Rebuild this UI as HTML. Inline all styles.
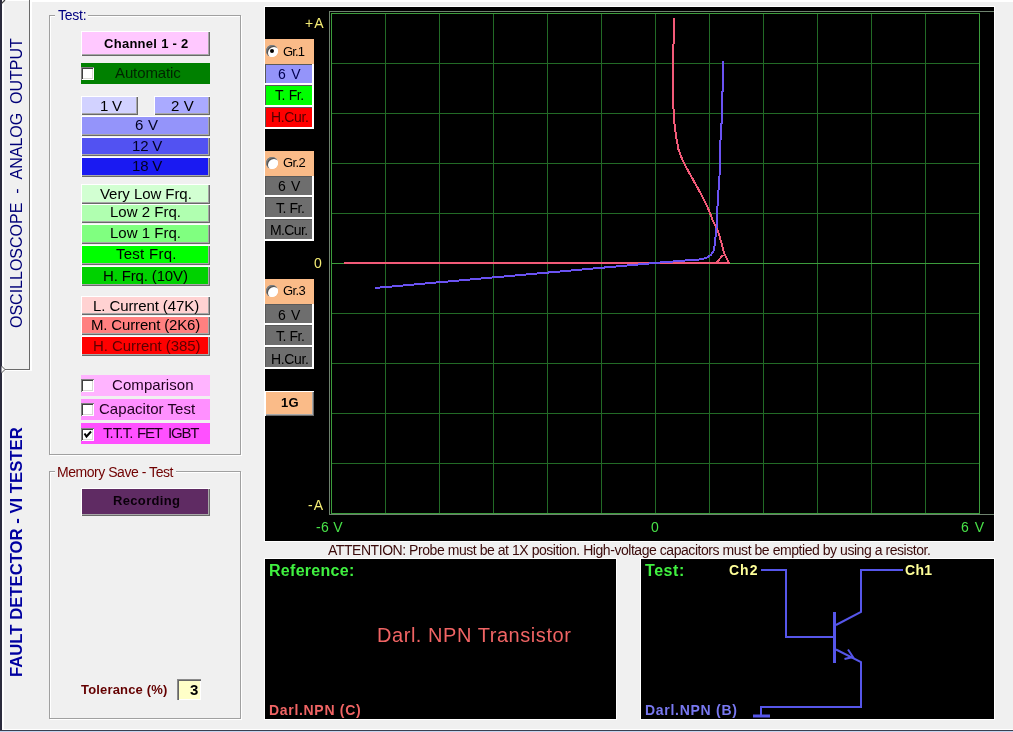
<!DOCTYPE html>
<html><head><meta charset="utf-8">
<style>
*{margin:0;padding:0;box-sizing:border-box}
html,body{width:1013px;height:732px;overflow:hidden;background:#F0F0F0;font-family:"Liberation Sans",sans-serif;position:relative}
.a{position:absolute}
.t{position:absolute;white-space:nowrap;line-height:1;will-change:transform}
</style></head><body>
<div class="a" style="left:0;top:0;width:2px;height:732px;background:#2b2b3d"></div>
<div class="a" style="left:2px;top:0;width:2px;height:730px;background:#fff"></div>
<div class="a" style="left:2px;top:0;width:1011px;height:1px;background:#fff"></div>
<div class="a" style="left:30px;top:1px;width:983px;height:1px;background:#fff"></div>
<div class="a" style="left:2px;top:729px;width:1011px;height:1px;background:#fff"></div>
<div class="a" style="left:0;top:730px;width:1013px;height:1px;background:#3a3f50"></div>
<div class="a" style="left:0;top:731px;width:1013px;height:1px;background:#c4d4ee"></div>
<div class="a" style="left:29px;top:0;width:1px;height:370px;background:#6a6a6a"></div>
<div class="a" style="left:30px;top:0;width:2px;height:371px;background:#fff"></div>
<div class="a" style="left:4px;top:369px;width:26px;height:1px;background:#6a6a6a"></div>
<div class="a" style="left:4px;top:370px;width:27px;height:1px;background:#fff"></div>
<svg class="a" style="left:0;top:0" width="40" height="380"><path d="M1.5 366 L5 369.5 L1.5 373" fill="#fff" stroke="#555" stroke-width="1"/><path d="M1.5 3.5 L5 0" stroke="#444" stroke-width="1.2"/></svg>
<div class="t" style="left:8.5px;top:328px;transform-origin:0 0;transform:rotate(-90deg);font-size:16px;color:#000078;">OSCILLOSCOPE&nbsp; - &nbsp;ANALOG&nbsp; OUTPUT</div>
<div class="t" style="left:9px;top:677px;transform-origin:0 0;transform:rotate(-90deg);font-size:16.7px;font-weight:bold;color:#0000a0;">FAULT DETECTOR - VI TESTER</div>
<div class="a" style="left:49px;top:15px;width:192px;height:440px;border:1px solid #a0a0a0;box-shadow:1px 1px #fff, inset 1px 1px #fff"></div>
<div class="a" style="left:55px;top:10px;width:33px;height:10px;background:#F0F0F0"></div>
<div class="a" style="left:49px;top:471px;width:192px;height:248px;border:1px solid #a0a0a0;box-shadow:1px 1px #fff, inset 1px 1px #fff"></div>
<div class="a" style="left:55px;top:466px;width:121px;height:10px;background:#F0F0F0"></div>
<div class="a" style="left:81px;top:31px;width:129px;height:25px;background:#ffc8ff;box-shadow:inset 1px 1px #fff,inset -1px -1px #696969,inset -2px -2px #a8a8a8"></div>
<div class="a" style="left:81px;top:63px;width:129px;height:21px;background:#008000"></div>
<div class="a" style="left:81px;top:67px;width:13px;height:13px;background:#fff;box-shadow:inset 1px 1px #808080,inset -1px -1px #fff,inset 2px 2px #404040,inset -2px -2px #d8d8d4"></div>
<div class="a" style="left:81px;top:96px;width:57px;height:19px;background:#d2d2ff;box-shadow:inset 1px 1px #fff,inset -1px -1px #696969,inset -2px -2px #a8a8a8"></div>
<div class="a" style="left:154px;top:96px;width:56px;height:19px;background:#aaaaff;box-shadow:inset 1px 1px #fff,inset -1px -1px #696969,inset -2px -2px #a8a8a8"></div>
<div class="a" style="left:81px;top:116px;width:129px;height:20px;background:#9494fa;box-shadow:inset 1px 1px #fff,inset -1px -1px #696969,inset -2px -2px #a8a8a8"></div>
<div class="a" style="left:81px;top:137px;width:129px;height:19px;background:#5252f2;box-shadow:inset 1px 1px #fff,inset -1px -1px #696969,inset -2px -2px #a8a8a8"></div>
<div class="a" style="left:81px;top:157px;width:129px;height:20px;background:#1a1af2;box-shadow:inset 1px 1px #fff,inset -1px -1px #696969,inset -2px -2px #a8a8a8"></div>
<div class="a" style="left:81px;top:184px;width:129px;height:20px;background:#d2ffd2;box-shadow:inset 1px 1px #fff,inset -1px -1px #696969,inset -2px -2px #a8a8a8"></div>
<div class="a" style="left:81px;top:204px;width:129px;height:19px;background:#b0ffb0;box-shadow:inset 1px 1px #fff,inset -1px -1px #696969,inset -2px -2px #a8a8a8"></div>
<div class="a" style="left:81px;top:224px;width:129px;height:20px;background:#80ff80;box-shadow:inset 1px 1px #fff,inset -1px -1px #696969,inset -2px -2px #a8a8a8"></div>
<div class="a" style="left:81px;top:245px;width:129px;height:20px;background:#00ff00;box-shadow:inset 1px 1px #fff,inset -1px -1px #696969,inset -2px -2px #a8a8a8"></div>
<div class="a" style="left:81px;top:266px;width:129px;height:20px;background:#00d200;box-shadow:inset 1px 1px #fff,inset -1px -1px #696969,inset -2px -2px #a8a8a8"></div>
<div class="a" style="left:81px;top:296px;width:129px;height:19px;background:#ffd2d2;box-shadow:inset 1px 1px #fff,inset -1px -1px #696969,inset -2px -2px #a8a8a8"></div>
<div class="a" style="left:81px;top:316px;width:129px;height:19px;background:#ff8080;box-shadow:inset 1px 1px #fff,inset -1px -1px #696969,inset -2px -2px #a8a8a8"></div>
<div class="a" style="left:81px;top:336px;width:129px;height:20px;background:#ff0000;box-shadow:inset 1px 1px #fff,inset -1px -1px #696969,inset -2px -2px #a8a8a8"></div>
<div class="a" style="left:81px;top:375px;width:129px;height:21px;background:#ffb4ff"></div>
<div class="a" style="left:81px;top:379px;width:13px;height:13px;background:#fff;box-shadow:inset 1px 1px #808080,inset -1px -1px #fff,inset 2px 2px #404040,inset -2px -2px #d8d8d4"></div>
<div class="a" style="left:81px;top:399px;width:129px;height:21px;background:#ff90ff"></div>
<div class="a" style="left:81px;top:403px;width:13px;height:13px;background:#fff;box-shadow:inset 1px 1px #808080,inset -1px -1px #fff,inset 2px 2px #404040,inset -2px -2px #d8d8d4"></div>
<div class="a" style="left:81px;top:423px;width:129px;height:21px;background:#ff50ff"></div>
<div class="a" style="left:81px;top:428px;width:13px;height:13px;background:#fff;box-shadow:inset 1px 1px #808080,inset -1px -1px #fff,inset 2px 2px #404040,inset -2px -2px #d8d8d4"></div><svg class="a" style="left:81px;top:428px" width="13" height="13"><path d="M3.5 5.5 L5.5 8.5 L10 3.5" stroke="#000" stroke-width="2" fill="none"/></svg>
<div class="a" style="left:81px;top:488px;width:129px;height:28px;background:#5f2b63;box-shadow:inset 1px 1px #fff,inset -1px -1px #696969,inset -2px -2px #a8a8a8"></div>
<div class="a" style="left:177px;top:679px;width:24px;height:21px;background:#ffffc8;box-shadow:inset 1px 1px #8a8a8a,inset 2px 2px #666,inset -1px -1px #fff"></div>
<div class="a" style="left:264px;top:6px;width:731px;height:536px;background:#fff"></div>
<div class="a" style="left:265px;top:7px;width:729px;height:534px;background:#000"></div>
<svg class="a" style="left:0;top:0" width="1013" height="732">
 <path d="M329.5 11V514.5M329 11.5H994M329 514.5H994" stroke="#6e826e" stroke-width="1" fill="none"/>
 <path d="M385.5 13.5V513 M439.5 13.5V513 M493.5 13.5V513 M547.5 13.5V513 M601.5 13.5V513 M655.5 13.5V513 M709.5 13.5V513 M763.5 13.5V513 M817.5 13.5V513 M871.5 13.5V513 M925.5 13.5V513 M331.5 63.5H979 M331.5 113.5H979 M331.5 163.5H979 M331.5 213.5H979 M331.5 313.5H979 M331.5 363.5H979 M331.5 413.5H979 M331.5 463.5H979" stroke="#226a26" stroke-width="1" fill="none"/>
 <rect x="331.5" y="13.5" width="648" height="500" stroke="#3c9c3c" stroke-width="1" fill="none"/>
 <path d="M331 263.5H979" stroke="#3c9c3c" stroke-width="1"/>
 <polyline points="344,263 729,263 724,253 722,245 718,231 713,221 708,208 701,194 691,176 685,165 682,159 678.5,149.5 676,136 674,120 674,113 673,105 673,48 674,40 674,18" stroke="#f25a78" stroke-width="2" fill="none" stroke-linejoin="round" shape-rendering="crispEdges"/>
 <path d="M723 255L717 262" stroke="#f25a78" stroke-width="2" shape-rendering="crispEdges"/>
 <polyline points="375,288 655,263 666,262 680,261 690,260 699,259.5 706,258 711,255 714,250 715,242 716.5,228 717,220 717,215 718,197 719.5,176 720,156 721,124 722,123 722,92 723,91 723,61" stroke="#6a52f2" stroke-width="2" fill="none" stroke-linejoin="round" shape-rendering="crispEdges"/>
</svg>
<div class="a" style="left:265px;top:39px;width:49px;height:25px;background:#fabb88"></div>
<div class="a" style="left:266px;top:45px;width:12px;height:12px;border-radius:50%;background:#fff;box-shadow:inset 1px 1px #808080,inset 2px 2px #505050,inset -1px -1px #fff"></div><div class="a" style="left:270px;top:49px;width:4px;height:4px;border-radius:50%;background:#000"></div>
<div class="a" style="left:264px;top:64px;width:50px;height:65px;background:#fff"></div>
<div class="a" style="left:265px;top:64px;width:47px;height:19px;background:#9494fa;box-shadow:inset 1px 1px #5a5a5a"></div>
<div class="a" style="left:265px;top:85px;width:47px;height:20px;background:#00ff00;box-shadow:inset 1px 1px #5a5a5a"></div>
<div class="a" style="left:265px;top:107px;width:47px;height:20px;background:#ff0000;box-shadow:inset 1px 1px #5a5a5a"></div>
<div class="a" style="left:265px;top:151px;width:49px;height:25px;background:#fabb88"></div>
<div class="a" style="left:266px;top:157px;width:12px;height:12px;border-radius:50%;background:#fff;box-shadow:inset 1px 1px #808080,inset 2px 2px #505050,inset -1px -1px #fff"></div>
<div class="a" style="left:264px;top:176px;width:50px;height:65px;background:#fff"></div>
<div class="a" style="left:265px;top:176px;width:47px;height:19px;background:#6e6e6e;box-shadow:inset 1px 1px #5a5a5a"></div>
<div class="a" style="left:265px;top:197px;width:47px;height:20px;background:#6e6e6e;box-shadow:inset 1px 1px #5a5a5a"></div>
<div class="a" style="left:265px;top:219px;width:47px;height:20px;background:#6e6e6e;box-shadow:inset 1px 1px #5a5a5a"></div>
<div class="a" style="left:265px;top:279px;width:49px;height:25px;background:#fabb88"></div>
<div class="a" style="left:266px;top:285px;width:12px;height:12px;border-radius:50%;background:#fff;box-shadow:inset 1px 1px #808080,inset 2px 2px #505050,inset -1px -1px #fff"></div>
<div class="a" style="left:264px;top:304px;width:50px;height:65px;background:#fff"></div>
<div class="a" style="left:265px;top:304px;width:47px;height:19px;background:#6e6e6e;box-shadow:inset 1px 1px #5a5a5a"></div>
<div class="a" style="left:265px;top:325px;width:47px;height:20px;background:#6e6e6e;box-shadow:inset 1px 1px #5a5a5a"></div>
<div class="a" style="left:265px;top:347px;width:47px;height:20px;background:#6e6e6e;box-shadow:inset 1px 1px #5a5a5a"></div>
<div class="a" style="left:265px;top:391px;width:49px;height:25px;background:#fabb88;box-shadow:inset 1px 1px #fff,inset -1px -1px #696969,inset -2px -2px #a8a8a8"></div>
<div class="a" style="left:264px;top:558px;width:353px;height:162px;background:#fff"></div>
<div class="a" style="left:265px;top:559px;width:351px;height:160px;background:#000"></div>
<div class="a" style="left:640px;top:558px;width:355px;height:162px;background:#fff"></div>
<div class="a" style="left:641px;top:559px;width:353px;height:160px;background:#000"></div>
<svg class="a" style="left:0;top:0" width="1013" height="732">
 <g stroke="#5656ea" fill="none" stroke-width="2">
  <path d="M761 570H786V637H834"/>
  <path d="M836 625L861 612V570H903"/>
  <path d="M836 649.5L861 662V707H761V715"/>
  <path d="M848 649.5L853 657L844.5 659"/>
 </g>
 <path d="M834.5 612V663" stroke="#5656ea" stroke-width="3"/>
 <path d="M753 716H770" stroke="#5656ea" stroke-width="3"/>
</svg>
<div class="t" style="left:58.00px;top:8px;font-size:14px;font-weight:normal;color:#000080;letter-spacing:-0.25px">Test:</div>
<div class="t" style="left:103.80px;top:37px;font-size:13px;font-weight:bold;color:#000000;letter-spacing:0.28px">Channel 1 - 2</div>
<div class="t" style="left:115.00px;top:65px;font-size:15px;font-weight:normal;color:#002400;letter-spacing:-0.12px">Automatic</div>
<div class="t" style="left:100.00px;top:98px;font-size:15px;font-weight:normal;color:#000000;letter-spacing:-0.20px">1 V</div>
<div class="t" style="left:170.80px;top:98px;font-size:15px;font-weight:normal;color:#000000;letter-spacing:0.10px">2 V</div>
<div class="t" style="left:134.80px;top:117px;font-size:15px;font-weight:normal;color:#000020;letter-spacing:0.25px">6 V</div>
<div class="t" style="left:131.60px;top:138px;font-size:15px;font-weight:normal;color:#000020;letter-spacing:-0.17px">12 V</div>
<div class="t" style="left:131.60px;top:158px;font-size:15px;font-weight:normal;color:#000020;letter-spacing:-0.17px">18 V</div>
<div class="t" style="left:100.20px;top:186px;font-size:15px;font-weight:normal;color:#000000;letter-spacing:-0.06px">Very Low Frq.</div>
<div class="t" style="left:110.20px;top:204px;font-size:15px;font-weight:normal;color:#000000;letter-spacing:0.02px">Low 2 Frq.</div>
<div class="t" style="left:110.20px;top:225px;font-size:15px;font-weight:normal;color:#000000;letter-spacing:0.02px">Low 1 Frq.</div>
<div class="t" style="left:116.20px;top:246px;font-size:15px;font-weight:normal;color:#000000;letter-spacing:0.26px">Test Frq.</div>
<div class="t" style="left:103.20px;top:268px;font-size:15px;font-weight:normal;color:#000000;letter-spacing:-0.15px">H. Frq. (10V)</div>
<div class="t" style="left:92.50px;top:298px;font-size:15px;font-weight:normal;color:#000000;letter-spacing:-0.09px">L. Current (47K)</div>
<div class="t" style="left:90.80px;top:317px;font-size:15px;font-weight:normal;color:#000000;letter-spacing:-0.16px">M. Current (2K6)</div>
<div class="t" style="left:92.50px;top:338px;font-size:15px;font-weight:normal;color:#5a0000;letter-spacing:-0.05px">H. Current (385)</div>
<div class="t" style="left:111.80px;top:377px;font-size:15px;font-weight:normal;color:#200020;letter-spacing:0.07px">Comparison</div>
<div class="t" style="left:99.40px;top:401px;font-size:15px;font-weight:normal;color:#200020;letter-spacing:0.04px">Capacitor Test</div>
<div class="t" style="left:103.10px;top:425px;font-size:15px;font-weight:normal;color:#200020;letter-spacing:-0.94px">T.T.T.</div>
<div class="t" style="left:136.50px;top:425px;font-size:15px;font-weight:normal;color:#200020;letter-spacing:-1.20px">FET</div>
<div class="t" style="left:168.40px;top:425px;font-size:15px;font-weight:normal;color:#200020;letter-spacing:-1.20px">IGBT</div>
<div class="t" style="left:57.20px;top:465px;font-size:14px;font-weight:normal;color:#700000;letter-spacing:-0.46px">Memory Save - Test</div>
<div class="t" style="left:112.60px;top:494px;font-size:13px;font-weight:bold;color:#0a000a;letter-spacing:0.34px">Recording</div>
<div class="t" style="left:81.40px;top:683px;font-size:13px;font-weight:bold;color:#640000;letter-spacing:0.17px">Tolerance (%)</div>
<div class="t" style="left:189.90px;top:682px;font-size:15px;font-weight:bold;color:#000000;letter-spacing:0.00px">3</div>
<div class="t" style="left:305.00px;top:16px;font-size:14px;font-weight:normal;color:#f4ec74;letter-spacing:1.00px">+A</div>
<div class="t" style="left:314.00px;top:256px;font-size:14px;font-weight:normal;color:#f4ec74;letter-spacing:0.00px">0</div>
<div class="t" style="left:308.00px;top:498px;font-size:14px;font-weight:normal;color:#f4ec74;letter-spacing:1.00px">-A</div>
<div class="t" style="left:316.00px;top:520px;font-size:14px;font-weight:normal;color:#48e048;letter-spacing:0.33px">-6 V</div>
<div class="t" style="left:651.00px;top:520px;font-size:14px;font-weight:normal;color:#48e048;letter-spacing:0.00px">0</div>
<div class="t" style="left:961.00px;top:520px;font-size:14px;font-weight:normal;color:#48e048;letter-spacing:1.00px">6 V</div>
<div class="t" style="left:282.70px;top:45px;font-size:13px;font-weight:normal;color:#000000;letter-spacing:-0.87px">Gr.1</div>
<div class="t" style="left:282.90px;top:156px;font-size:13px;font-weight:normal;color:#000000;letter-spacing:-0.63px">Gr.2</div>
<div class="t" style="left:282.90px;top:284px;font-size:13px;font-weight:normal;color:#000000;letter-spacing:-0.63px">Gr.3</div>
<div class="t" style="left:277.80px;top:67px;font-size:14px;font-weight:normal;color:#000050;letter-spacing:0.80px">6 V</div>
<div class="t" style="left:275.30px;top:88px;font-size:14px;font-weight:normal;color:#000000;letter-spacing:-0.38px">T. Fr.</div>
<div class="t" style="left:270.60px;top:110px;font-size:14px;font-weight:normal;color:#500000;letter-spacing:-0.36px">H.Cur.</div>
<div class="t" style="left:277.80px;top:179px;font-size:14px;font-weight:normal;color:#000000;letter-spacing:0.70px">6 V</div>
<div class="t" style="left:275.50px;top:201px;font-size:14px;font-weight:normal;color:#000000;letter-spacing:-0.46px">T. Fr.</div>
<div class="t" style="left:270.20px;top:223px;font-size:14px;font-weight:normal;color:#000000;letter-spacing:-0.64px">M.Cur.</div>
<div class="t" style="left:277.80px;top:308px;font-size:14px;font-weight:normal;color:#000000;letter-spacing:0.70px">6 V</div>
<div class="t" style="left:275.50px;top:329px;font-size:14px;font-weight:normal;color:#000000;letter-spacing:-0.46px">T. Fr.</div>
<div class="t" style="left:270.60px;top:352px;font-size:14px;font-weight:normal;color:#000000;letter-spacing:-0.36px">H.Cur.</div>
<div class="t" style="left:280.90px;top:396px;font-size:13px;font-weight:bold;color:#000000;letter-spacing:0.20px">1G</div>
<div class="t" style="left:328.00px;top:543px;font-size:14px;font-weight:normal;color:#3a0a0a;letter-spacing:-0.45px">ATTENTION: Probe must be at 1X position. High-voltage capacitors must be emptied by using a resistor.</div>
<div class="t" style="left:269.00px;top:563px;font-size:16px;font-weight:bold;color:#40f040;letter-spacing:0.29px">Reference:</div>
<div class="t" style="left:376.70px;top:625px;font-size:20px;font-weight:normal;color:#f06464;letter-spacing:0.55px">Darl. NPN Transistor</div>
<div class="t" style="left:268.70px;top:703px;font-size:14px;font-weight:bold;color:#f06464;letter-spacing:0.69px">Darl.NPN (C)</div>
<div class="t" style="left:645.00px;top:563px;font-size:16px;font-weight:bold;color:#40f040;letter-spacing:0.55px">Test:</div>
<div class="t" style="left:728.80px;top:563px;font-size:14px;font-weight:bold;color:#ffff99;letter-spacing:1.00px">Ch2</div>
<div class="t" style="left:905.30px;top:563px;font-size:14px;font-weight:bold;color:#ffff99;letter-spacing:0.35px">Ch1</div>
<div class="t" style="left:644.50px;top:703px;font-size:14px;font-weight:bold;color:#7878f0;letter-spacing:0.72px">Darl.NPN (B)</div>
</body></html>
